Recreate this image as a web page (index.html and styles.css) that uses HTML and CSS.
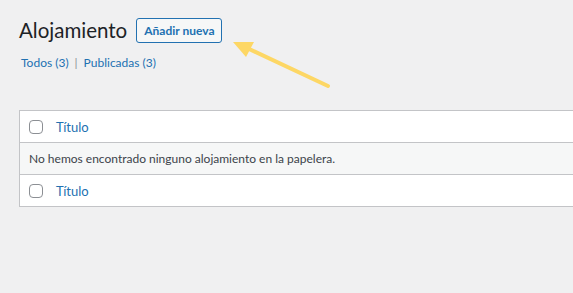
FILE: index.html
```html
<!DOCTYPE html>
<html lang="es">
<head>
    <meta charset="UTF-8">
    <title>Alojamiento</title>
    <link rel="stylesheet" href="styles.css">
</head>
<body>
    <div class="wrap">
        <div class="title-row">
            <h1>Alojamiento</h1>
            <a class="add-new" href="#">Añadir nueva</a>
        </div>

        <ul class="subsubsub">
            <li><a href="#">Todos <span class="count">(3)</span></a></li>
            <li class="sep">|</li>
            <li><a href="#">Publicadas <span class="count">(3)</span></a></li>
        </ul>

        <table class="list-table">
            <thead>
                <tr>
                    <td class="check"><span class="box"></span></td>
                    <th><a href="#">Título</a></th>
                </tr>
            </thead>
            <tbody>
                <tr class="no-items">
                    <td colspan="2">No hemos encontrado ninguno alojamiento en la papelera.</td>
                </tr>
            </tbody>
            <tfoot>
                <tr>
                    <td class="check"><span class="box"></span></td>
                    <th><a href="#">Título</a></th>
                </tr>
            </tfoot>
        </table>
    </div>

    <!-- flecha amarilla -->
    <svg class="arrow" width="120" height="70" viewBox="0 0 120 70">
        <line x1="103" y1="56" x2="22" y2="18" stroke="#fdd765" stroke-width="4" stroke-linecap="round"/>
        <polygon points="8,12 29,12 21,27" fill="#fdd765"/>
    </svg>
</body>
</html>
```

FILE: styles.css
```css
body {
    margin: 0;
    background: #f0f0f1;
    font-family: Lato, sans-serif;
    font-size: 13px;
    color: #3c434a;
}
a {
    color: #2271b1;
    text-decoration: none;
}
.wrap {
    padding: 13px 0 0 19px;
    overflow: hidden;
    height: 280px;
}
.title-row {
    display: flex;
    align-items: center;
    gap: 9px;
    height: 33px;
}
h1 {
    margin: 0;
    font-size: 20.5px;
    font-weight: 400;
    color: #1d2327;
    line-height: 30px;
}
.add-new {
    display: inline-block;
    border: 1px solid #2271b1;
    border-radius: 3px;
    background: #f6f7f7;
    font-size: 12px;
    font-weight: 700;
    line-height: 23px;
    padding: 0 7px;
    margin-top: 2px;
}
.subsubsub {
    list-style: none;
    margin: 8px 0 0 2px;
    padding: 0;
    display: flex;
    gap: 6px;
    font-size: 12px;
    line-height: 18px;
}
.subsubsub .sep {
    color: #8c8f94;
}
.list-table {
    margin-top: 38px;
    width: calc(100% + 40px);
    border-collapse: collapse;
    background: #fff;
    border: 1px solid #c3c4c7;
}
.list-table th,
.list-table td {
    text-align: left;
    font-weight: 400;
    padding: 0;
    height: 31px;
    vertical-align: middle;
    font-size: 13px;
}
.list-table thead tr {
    border-bottom: 1px solid #c3c4c7;
}
.list-table tfoot tr {
    border-top: 1px solid #c3c4c7;
}
.list-table .check {
    width: 27px;
    padding-left: 9px;
}
.box {
    display: block;
    width: 12px;
    height: 12px;
    border: 1px solid #8c8f94;
    border-radius: 4px;
    background: #fff;
}
.no-items td {
    background: #f6f7f7;
    padding-left: 9px;
    font-size: 12px;
    color: #3c434a;
}
.arrow {
    position: absolute;
    left: 225px;
    top: 30px;
}
```
